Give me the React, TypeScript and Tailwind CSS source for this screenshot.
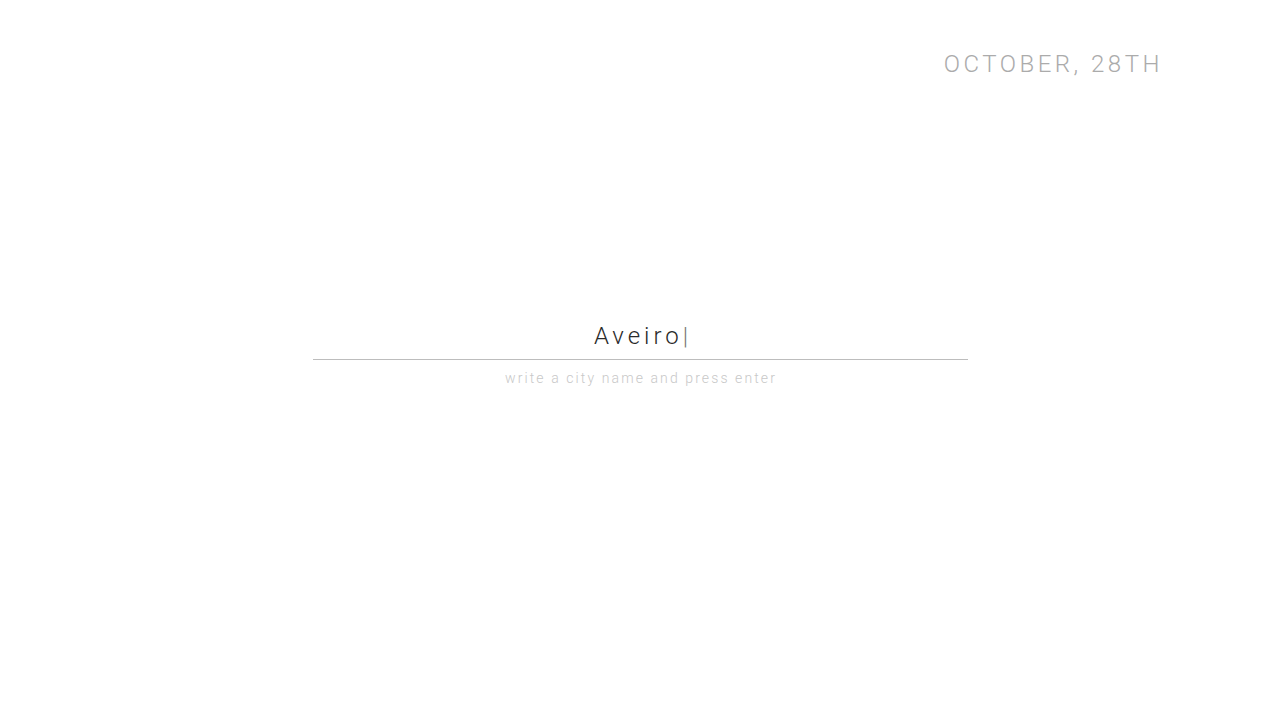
import { useState } from 'react';

export default function App() {
  const [city, setCity] = useState('Aveiro');

  return (
    <div
      className="min-h-screen bg-white flex flex-col"
      style={{ fontFamily: 'Roboto, "Liberation Sans", sans-serif' }}
    >
      {/* date */}
      <header className="flex justify-end pt-[48px] pr-[117px]">
        <span className="text-[24px] leading-[32px] font-light tracking-[3.5px] text-[#ababab]">
          OCTOBER, 28TH
        </span>
      </header>

      {/* search */}
      <main className="flex flex-col items-center pt-[240px]">
        <label className="w-[655px] border-b border-[#bdbdbd] pb-[7px] flex justify-center pl-[6px] text-[24px] leading-[32px] font-light tracking-[4px]">
          <input
            value={city}
            onChange={e => setCity(e.target.value)}
            size={Math.max(city.length, 1)}
            className="bg-transparent outline-none text-right text-[#2a2a2a] field-sizing-content"
          />
          <span className="text-[#777]">|</span>
        </label>
        <p className="mt-[8px] pl-[2px] text-[14px] leading-[20px] font-light tracking-[2.1px] text-[#c8c8c8]">
          write a city name and press enter
        </p>
      </main>
    </div>
  );
}
